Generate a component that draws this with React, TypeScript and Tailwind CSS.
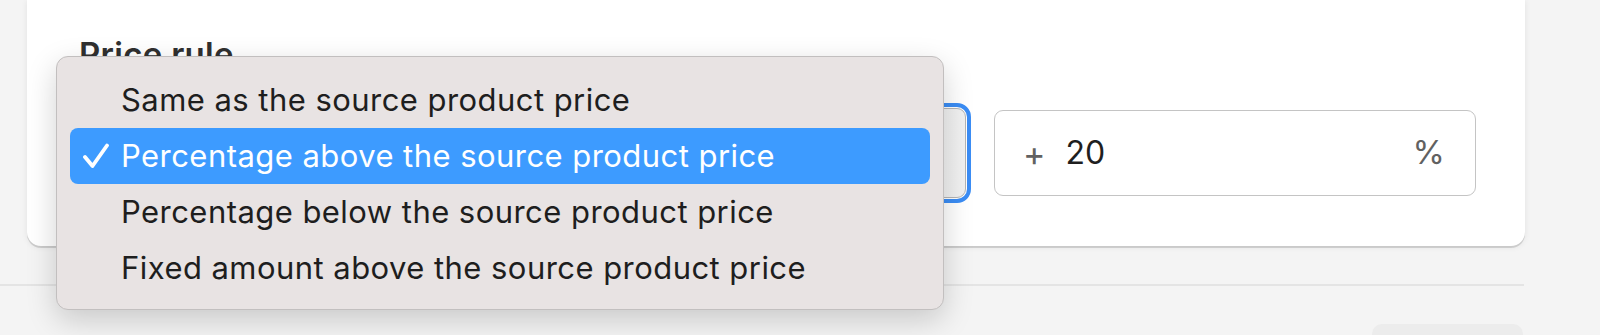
import React from "react";

const options = [
  "Same as the source product price",
  "Percentage above the source product price",
  "Percentage below the source product price",
  "Fixed amount above the source product price",
];

function Check() {
  return (
    <svg width="28" height="26" viewBox="0 0 28 26" fill="none">
      <path d="M3 14 L10.5 23 L25 2.5" stroke="#fff" strokeWidth="3.8" strokeLinecap="round" strokeLinejoin="round" />
    </svg>
  );
}

export default function App() {
  const selected = 1;
  return (
    <div className="relative h-[335px] w-[1600px] overflow-hidden bg-[#f4f4f4] font-['Inter',sans-serif]">
      {/* card */}
      <div className="ml-[27px] w-[1498px] rounded-b-[14px] bg-white pl-[52px] pr-[49px] pt-[34px] pb-[48px] shadow-[0_2px_0_rgba(0,0,0,0.13),0_1px_6px_rgba(0,0,0,0.08)]">
        <div className="text-[33px] font-semibold leading-[40px] tracking-[0.3px] text-[#303030]">Price rule</div>
        <div className="mt-[34px] flex items-center gap-[28px]">
          <div className="h-[90px] flex-1 rounded-[9px] border border-[#b5b5b5] bg-gradient-to-r from-white to-[#f1f1f1] outline outline-[4px] outline-offset-[1px] outline-[#3b8df5]" />
          <div className="flex h-[86px] w-[482px] items-center rounded-[9px] border border-[#c4c4c4] bg-white pl-[28px] pr-[30px]">
            <span className="text-[34px] font-normal text-[#616161]">+</span>
            <span className="ml-[20px] text-[32px] text-[#1f1f1f]">20</span>
            <span className="ml-auto text-[33px] font-normal text-[#616161]">%</span>
          </div>
        </div>
      </div>

      {/* footer divider + button */}
      <div className="mt-[38px] h-[2px] w-[1524px] bg-[#e4e4e4]" />
      <div className="ml-[1372px] mt-[38px] h-[40px] w-[151px] rounded-[10px] bg-[#ececec]" />

      {/* native select menu */}
      <div className="absolute left-[56px] top-[56px] w-[888px] rounded-[12px] border border-[#c2bfbf] bg-[#e8e3e3] px-[13px] pt-[15px] pb-[13px] shadow-[0_10px_30px_rgba(0,0,0,0.18)]">
        {options.map((o, i) => (
          <div
            key={o}
            className={`flex h-[56px] items-center rounded-[8px] pl-[12px] text-[31px] tracking-[0.45px] ${
              i === selected ? "bg-[#3d9bff] text-white" : "text-[#1e1e1e]"
            }`}
          >
            <span className="flex w-[39px] items-center">{i === selected && <Check />}</span>
            {o}
          </div>
        ))}
      </div>
    </div>
  );
}
